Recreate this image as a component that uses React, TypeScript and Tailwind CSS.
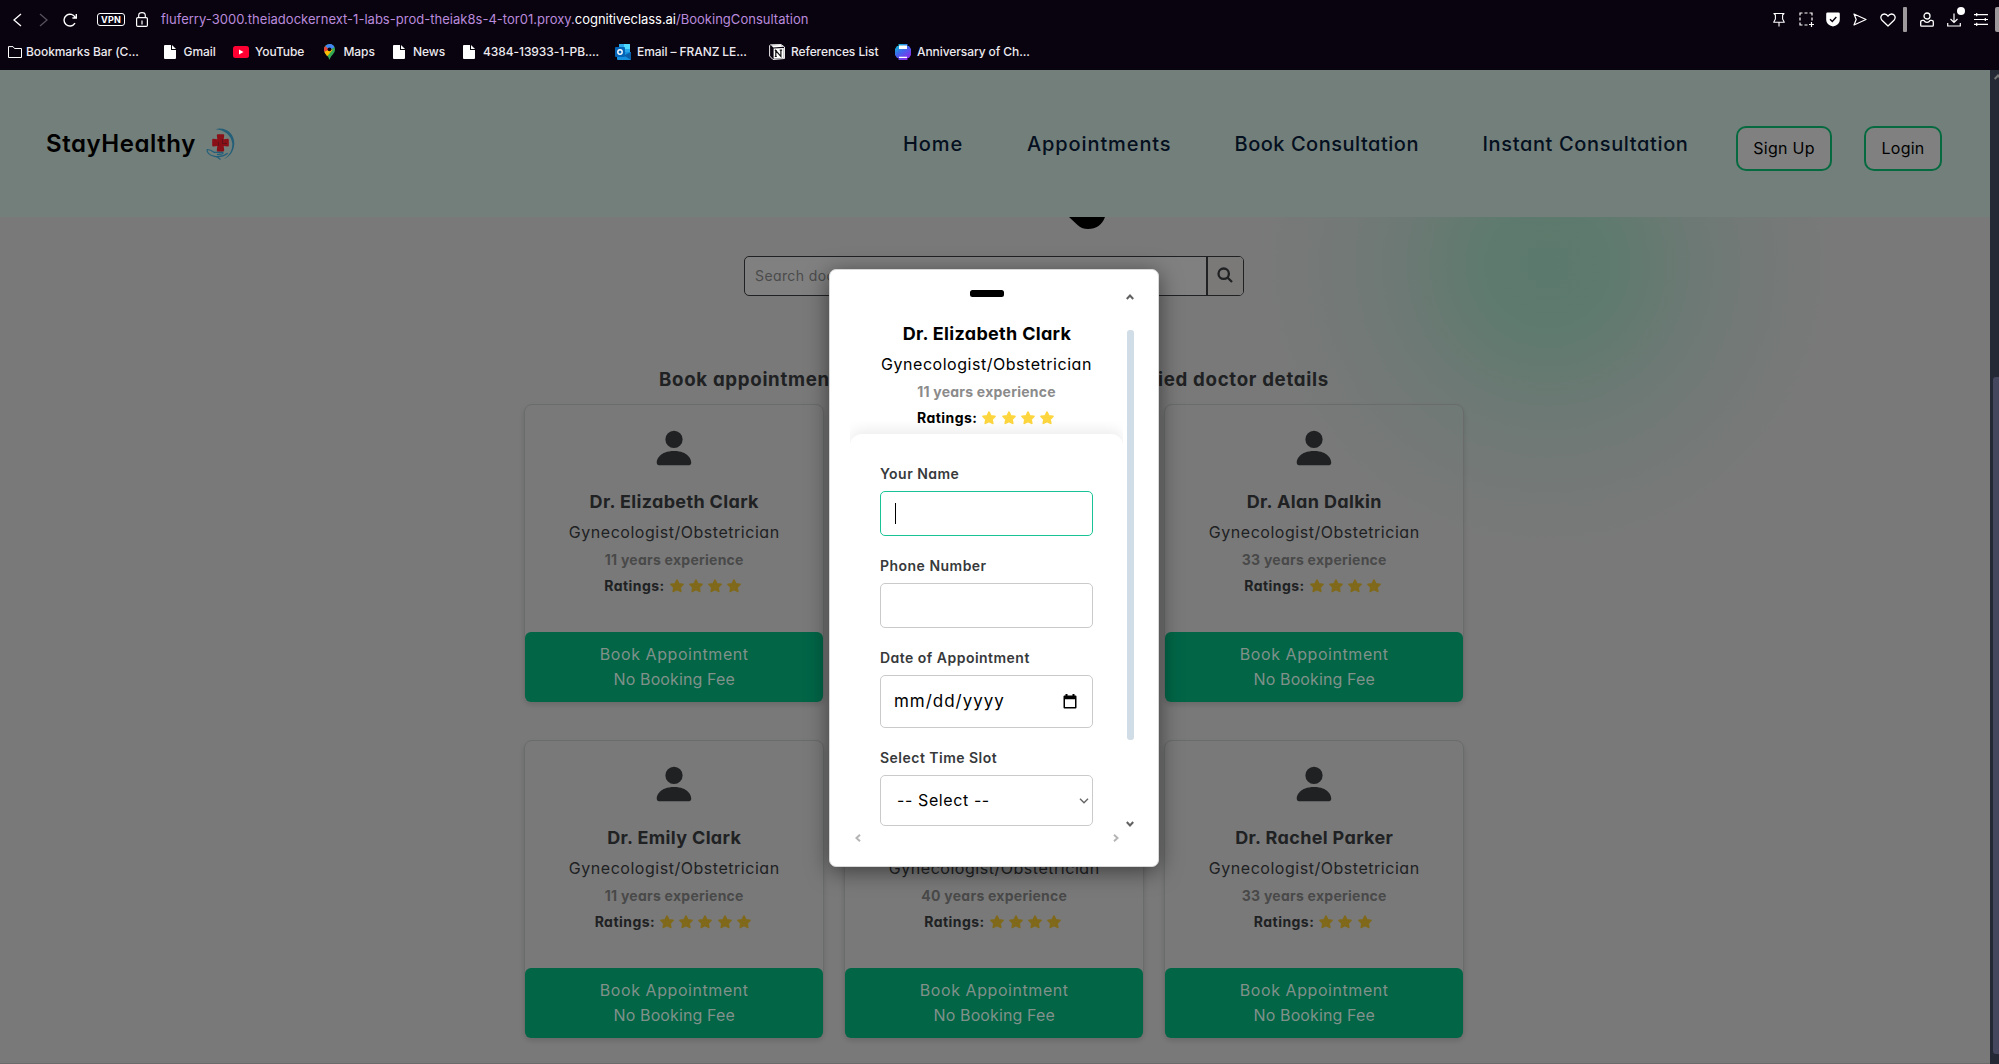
import type { ReactNode } from 'react';
import { BsPersonFill } from 'react-icons/bs';

type Doctor = { name: string; years: string; stars: number };

const doctors: Doctor[] = [
  { name: 'Dr. Elizabeth Clark', years: '11', stars: 4 },
  { name: 'Dr. Sarah Paulson', years: '15', stars: 4 },
  { name: 'Dr. Alan Dalkin', years: '33', stars: 4 },
  { name: 'Dr. Emily Clark', years: '11', stars: 5 },
  { name: 'Dr. Tiana Parker', years: '40', stars: 4 },
  { name: 'Dr. Rachel Parker', years: '33', stars: 3 },
];

function Star({ className }: { className: string }) {
  return (
    <svg viewBox="0 0 14 14" className={'h-[14px] w-[14px] ' + className} fill="currentColor" stroke="currentColor" strokeWidth="1.8" strokeLinejoin="round">
      <path d="M7 1.2 8.700 4.900 12.900 5.400 10 8.300 10.700 12.300 7 10.500 3.300 12.300 4 8.300 1.100 5.400 5.300 4.900Z" />
    </svg>
  );
}

function Ratings({ count, starClass }: { count: number; starClass: string }) {
  return (
    <div className="mt-[5px] flex h-[21px] items-center text-[14px] leading-[21px] font-bold tracking-[0.45px]">
      <span className="mr-[5px]">Ratings:</span>
      <span className="flex gap-[5.2px]">
        {Array.from({ length: count }, (_, i) => (
          <Star key={i} className={starClass} />
        ))}
      </span>
      <span className="w-[2px]" />
    </div>
  );
}

function DoctorCard({ doctor }: { doctor: Doctor }) {
  return (
    <article className="flex h-[298px] w-[299.5px] flex-col items-center rounded-[8px] border border-[#6a6b6b] shadow-[0_3px_5px_rgba(0,0,0,0.13)]">
      <BsPersonFill className="mt-[20px] h-[46px] w-[46px]" />
      <h4 className="mt-[17px] pl-px text-[18px] leading-[27px] font-bold tracking-[0.35px]">{doctor.name}</h4>
      <p className="mt-[5px] pl-px text-[16px] leading-[24px] tracking-[0.53px]">Gynecologist/Obstetrician</p>
      <p className="mt-[5px] pl-px text-[14px] leading-[21px] font-bold tracking-[0.25px] text-[#494949]">{doctor.years} years experience</p>
      <Ratings count={doctor.stars} starClass="text-[#80691a]" />
      <button className="mt-auto -mb-px h-[70px] w-[298px] rounded-[6px] bg-[#016546] pl-px text-[16px] leading-[25px] tracking-[0.57px] text-[#80918a]">
        Book Appointment
        <br />
        <span className="tracking-[0.12px]">No Booking Fee</span>
      </button>
    </article>
  );
}

function FileIcon() {
  return (
    <svg viewBox="0 0 12 14" className="h-[14px] w-[12px]">
      <path d="M1 0H7V5H12V13a1 1 0 0 1-1 1H1a1 1 0 0 1-1-1V1a1 1 0 0 1 1-1Z" fill="#fff" />
      <path d="M8 0 12 4H8Z" fill="#fff" />
    </svg>
  );
}

function Bookmark({ icon, label, className }: { icon: ReactNode; label: string; className: string }) {
  return (
    <div className={'flex shrink-0 items-center ' + className}>
      {icon}
      <span className="whitespace-nowrap">{label}</span>
    </div>
  );
}

function BrowserBar() {
  return (
    <div className="h-[70px] shrink-0 bg-[#09020f] text-white">
      <div className="flex h-[39px] items-center pl-[12px]">
        <svg viewBox="0 0 10 14" className="h-[14px] w-[10px]" fill="none" stroke="#fff" strokeWidth="1.3"><path d="M9 1 2 7l7 6" /></svg>
        <svg viewBox="0 0 10 14" className="ml-[17px] h-[14px] w-[10px]" fill="none" stroke="#57505d" strokeWidth="1.3"><path d="M1 1l7 6-7 6" /></svg>
        <svg viewBox="0 0 15 14" className="ml-[14px] h-[14px] w-[15px]" fill="none" stroke="#fff" strokeWidth="1.4">
          <path d="M12 10.2A5.9 5.9 0 1 1 12.3 4.6M13.3 1v4H9.4" />
        </svg>
        <span className="ml-[19px] flex h-[13px] w-[28px] items-center justify-center rounded-[3px] border border-white text-[9px] leading-none font-bold tracking-[0.2px]">VPN</span>
        <svg viewBox="0 0 12 15" className="ml-[11px] h-[15px] w-[12px]" fill="none" stroke="#fff" strokeWidth="1.2">
          <rect x=".6" y="5.6" width="10.8" height="8.8" rx="1.2" />
          <path d="M2.7 5.6V3.4Q2.7.6 6 .6t3.3 2.8v2.2M6 8.4v4" />
        </svg>
        <p className="ml-[13px] pb-px whitespace-nowrap text-[13px] leading-[20px] text-[#b98bdc]">
          <span className="tracking-[0.02px]">fluferry-3000.theiadockernext-1-labs-prod-theiak8s-4-tor01.proxy.</span>
          <span className="tracking-[-0.04px] text-white">cognitiveclass.ai</span>
          <span className="tracking-[0.02px]">/BookingConsultation</span>
        </p>
        <div className="ml-auto flex shrink-0 items-center">
          <svg viewBox="0 0 12 15" className="h-[15px] w-[12px]" fill="none" stroke="#fff" strokeWidth="1.1" strokeLinejoin="round">
            <path d="M1 1.5h10L9.6 3v4L11.3 10.2H.7L2.4 7V3ZM6 10.2v4.4" />
          </svg>
          <svg viewBox="0 0 15 15" className="ml-[14px] h-[15px] w-[15px]" fill="none" stroke="#fff" strokeWidth="1.2">
            <path d="M1 3.5V1h2.500M5.500 1h3M10.500 1H13v2.500M13 5.500v3M1 5.500v3M1 10.500V13h2.500M5.500 13h3M12.500 10v5M10 12.500h5" />
          </svg>
          <svg viewBox="0 0 14 15" className="ml-[12px] h-[15px] w-[14px]">
            <path d="M1.500.5h11a1.300 1.300 0 0 1 1.300 1.300V8Q13.800 12.500 7 14.600.2 12.500.2 8V1.800A1.300 1.300 0 0 1 1.500.5Z" fill="#fff" />
            <path d="M4 7.200 6.300 9.500 10.300 5" fill="none" stroke="#09020f" strokeWidth="1.500" />
          </svg>
          <svg viewBox="0 0 14 13" className="ml-[13px] h-[13px] w-[14px]" fill="none" stroke="#fff" strokeWidth="1.200" strokeLinejoin="round">
            <path d="M1 1 13 6.500 1 12 3.200 6.500Z" />
          </svg>
          <svg viewBox="0 0 16 14" className="ml-[13px] h-[14px] w-[16px]" fill="none" stroke="#fff" strokeWidth="1.300" strokeLinejoin="round">
            <path d="M8 13 2 7.300C-.2 4.900 1 1 4.300 1 6 1 7.300 1.900 8 3.200 8.700 1.900 10 1 11.700 1 15 1 16.200 4.900 14 7.300Z" />
          </svg>
          <span className="ml-[7px] h-[25px] w-[4px] rounded-[1px] bg-[#9c989b]" />
          <svg viewBox="0 0 14 15" className="ml-[13px] h-[15px] w-[14px]" fill="none" stroke="#fff" strokeWidth="1.300">
            <circle cx="7" cy="4" r="3" />
            <path d="M3.800 8.300H2.600Q.7 8.300 .7 10.200v3q0 .9.900.9h10.800q.9 0 .9-.9v-3q0-1.900-1.900-1.900h-1.200Q9 10.300 7 10.300T3.800 8.300Z" strokeLinejoin="round" />
          </svg>
          <span className="relative ml-[13px] h-[14px] w-[14px]">
            <svg viewBox="0 0 14 14" className="h-[14px] w-[14px]" fill="none" stroke="#fff" strokeWidth="1.200">
              <path d="M7 .5v8.500M3.500 6 7 9.500 10.500 6M.7 10v3h12.600v-3" />
            </svg>
            <span className="absolute -top-[6px] left-[10px] h-[8px] w-[8px] rounded-full bg-white" />
          </span>
          <svg viewBox="0 0 14 13" className="ml-[13px] h-[13px] w-[14px]" fill="none" stroke="#fff" strokeWidth="1.200">
            <path d="M0 1.600h14M0 6.500h14M0 11.400h14M2.700 0v3.200M11.300 4.900v3.200M2.700 9.800V13" />
          </svg>
          <span className="ml-[7px] h-[25px] w-[4px] rounded-l-[2px] bg-[#9c989b]" />
        </div>
      </div>

      <div className="flex h-[25px] items-center pl-[8px] text-[12px] font-medium tracking-[-0.08px] text-[#eceaee]">
        <Bookmark
          className="w-[155.5px] gap-[4px]"
          label="Bookmarks Bar (C..."
          icon={<svg viewBox="0 0 14 12" className="h-[12px] w-[14px]" fill="none" stroke="#fff"><path d="M.5.600H5L6.500 2.500h7v9H.5Z" /></svg>}
        />
        <Bookmark className="w-[69.5px] gap-[8px]" label="Gmail" icon={<FileIcon />} />
        <Bookmark
          className="w-[90.5px] gap-[6px]"
          label="YouTube"
          icon={<svg viewBox="0 0 16 12" className="h-[12px] w-[16px]"><rect width="16" height="12" rx="2.500" fill="#ff0033" /><path d="M6 3.500v5L10.500 6Z" fill="#fff" /></svg>}
        />
        <Bookmark
          className="w-[69.5px] gap-[9px]"
          label="Maps"
          icon={
            <svg viewBox="0 0 11 16" className="h-[16px] w-[11px]">
              <path d="M5.500 0A5.500 5.500 0 0 1 11 5.500C11 9.500 7 11 5.500 16 4.500 11.500 0 9.500 0 5.500A5.500 5.500 0 0 1 5.500 0Z" fill="#34a853" />
              <path d="M.4 8 6 2.500 8.500 6 3.200 12.200Q1.300 10 .4 8Z" fill="#fbbc04" />
              <path d="M1.300 2A5.500 5.500 0 0 0 .3 7.800L5.500 5.500Z" fill="#ea4335" />
              <path d="M1.300 2A5.500 5.500 0 0 1 10.500 3.200L5.500 6Z" fill="#4285f4" />
              <circle cx="5.500" cy="5.300" r="1.900" fill="#09020f" />
            </svg>
          }
        />
        <Bookmark className="w-[70px] gap-[8px]" label="News" icon={<FileIcon />} />
        <Bookmark className="w-[152px] gap-[8px]" label="4384-13933-1-PB...." icon={<FileIcon />} />
        <Bookmark
          className="w-[154px] gap-[6px]"
          label="Email – FRANZ LE..."
          icon={
            <svg viewBox="0 0 16 16" className="h-[16px] w-[16px]">
              <path d="M4 0h11v8H4Z" fill="#28a8ea" />
              <path d="M9 0h6v5H9Z" fill="#50d9ff" />
              <path d="M2 8h14v8H3a1 1 0 0 1-1-1Z" fill="#1490df" />
              <path d="M16 8v8L9 11.500Z" fill="#0a5ea8" />
              <rect y="3" width="10" height="10" rx="1" fill="#0364b8" />
              <circle cx="5" cy="8" r="2.200" fill="none" stroke="#fff" strokeWidth="1.400" />
            </svg>
          }
        />
        <Bookmark
          className="w-[126px] gap-[6px]"
          label="References List"
          icon={
            <svg viewBox="0 0 16 16" className="h-[16px] w-[16px]">
              <path d="M1.500.8 12 .5 15.500 3V14.500L4 15.500.6 12V1.500Z" fill="#09020f" stroke="#e8e8e8" />
              <path d="M2 1.200 12 .9 14.500 2.800 4.300 3.400Z" fill="#fff" />
              <path d="M4.600 4.500 14.800 3.900V14L4.600 14.700Z" fill="#fff" />
              <path d="M6.800 12.500V6.500L11.900 12.300V6.200M5.800 6.500h2M10.700 6.200h2.400M5.800 12.500h2" stroke="#111" strokeWidth="1.200" fill="none" />
            </svg>
          }
        />
        <Bookmark
          className="gap-[6px]"
          label="Anniversary of Ch..."
          icon={
            <svg viewBox="0 0 16 16" className="h-[16px] w-[16px]">
              <defs><linearGradient id="badge" x1="0" y1="0" x2=".7" y2="1"><stop stopColor="#00d0cc" /><stop offset=".5" stopColor="#3f66ee" /><stop offset="1" stopColor="#8b2be8" /></linearGradient></defs>
              <path d="M3.500 0h9v2H14l2 3v6l-2 3h-1.500v2h-9v-2H2L0 11V5l2-3h1.500Z" fill="url(#badge)" />
              <path d="M4 1.500h8V5H4ZM4 12.700h8v1.400H4Z" fill="#fff" />
            </svg>
          }
        />
      </div>
    </div>
  );
}

function Logo() {
  return (
    <svg viewBox="0 0 30 32" className="h-[32px] w-[30px]" fill="none">
      <path d="M9.500 1.200C20-1.600 28.500 6 28.300 15.500 28.100 23 24 28.500 18 31 24 27 26.600 21.500 26.300 15.500 25.700 7.500 18.500 1.800 9.500 1.200Z" fill="#235f78" />
      <path d="M.8 21.500Q1.500 27 8 28.200q4 .5 6.500 3.300M1 21.500q4 0 7 2.800l8-.1q2.200.6 0 1.700l-5 .7M8.500 28.300q7 1.500 13.300-3.100" stroke="#245f7a" strokeWidth="1.200" />
      <path d="M11.800 6.200h5.400q1 0 1 1l-.5 4 4-.4q1.100 0 1.100 1v5.600q0 1.100-1.100 1l-4-.5.500 4q0 1.500-1 1.500h-5.400q-1 0-1-1.500l.5-4-4 .500q-1.100 0-1.100-1v-5.600q0-1.100 1.100-1l4 .500-.5-4q0-1.100 1-1.100Z" fill="#8a1018" />
      <path d="M16.500 11v4.500H21M12.500 17.800v-4" stroke="#5f1016" />
    </svg>
  );
}

function Header() {
  return (
    <header className="flex h-[147px] items-center bg-[#737f7a] pl-[46px] text-[20px] font-medium text-[#040f20]">
      <div className="flex w-[857px] items-center">
        <span className="text-[24px] font-semibold tracking-[0.57px] text-black">StayHealthy</span>
        <span className="ml-[10px]"><Logo /></span>
      </div>
      <nav className="flex whitespace-nowrap">
        <a className="w-[124px] tracking-[0.88px]">Home</a>
        <a className="w-[207.5px] tracking-[0.89px]">Appointments</a>
        <a className="w-[248px] tracking-[0.52px]">Book Consultation</a>
        <a className="w-[253.5px] tracking-[0.64px]">Instant Consultation</a>
      </nav>
      <div className="mt-[10px] flex gap-[32px] text-[16px] font-normal tracking-[0.25px] text-black">
        <button className="h-[45px] w-[96px] rounded-[10px] border-2 border-[#066a40] bg-[#808080] pb-px">Sign Up</button>
        <button className="h-[45px] w-[78px] rounded-[10px] border-2 border-[#066a40] bg-[#808080] pb-px">Login</button>
      </div>
    </header>
  );
}

function Field({ label, active, className, children }: { label: string; active?: boolean; className: string; children?: ReactNode }) {
  return (
    <label className="block">
      <span className="block text-[14px] leading-[21px] font-semibold tracking-[0.48px] text-[#37393b]">{label}</span>
      <span className={'mt-[7px] flex items-center rounded-[5px] border bg-white ' + (active ? 'border-[#18c496] ' : 'border-[#cacaca] ') + className}>{children}</span>
    </label>
  );
}

function Chevron({ className }: { className?: string }) {
  return (
    <svg viewBox="0 0 8 8" className={'h-[8px] w-[8px] ' + (className ?? '')} fill="none" stroke="currentColor" strokeWidth="2"><path d="M.8 6 4 2.500 7.200 6" /></svg>
  );
}

function BookingModal() {
  return (
    <div className="absolute top-[199px] left-[829px] flex h-[598px] w-[330px] rounded-[7px] border border-[#d8d8d8] bg-white text-black shadow-[0_4px_22px_rgba(0,0,0,0.5)]">
      <div className="ml-[20px] flex w-[273px] flex-col items-center">
        <div className="mt-[20px] mr-[-1px] h-[7px] w-[34px] shrink-0 rounded-[2.5px] bg-black" />
        <h4 className="mt-[23px] pl-px text-[18px] leading-[27px] font-bold tracking-[0.31px]">Dr. Elizabeth Clark</h4>
        <p className="mt-[5px] text-[16px] leading-[24px] tracking-[0.53px]">Gynecologist/Obstetrician</p>
        <p className="mt-[5px] text-[14px] leading-[21px] font-bold tracking-[0.23px] text-[#8b8b8b]">11 years experience</p>
        <Ratings count={4} starClass="text-[#fdd63f]" />
        <div className="-mt-[7px] w-full overflow-hidden pt-[13px]">
          <div className="h-[393px] rounded-t-[12px] px-[30px] pt-[29px] shadow-[0_-4px_14px_rgba(0,0,0,0.08)]">
            <Field label="Your Name" active className="h-[45px] pl-[14px]"><span className="h-[21px] w-px bg-black" /></Field>
            <div className="h-[19px]" />
            <Field label="Phone Number" className="h-[45px]" />
            <div className="h-[19px]" />
            <Field label="Date of Appointment" className="h-[53px] justify-between pr-[15px] pl-[13px]">
              <span className="text-[17px] tracking-[0.97px]">mm/dd/yyyy</span>
              <svg viewBox="0 0 14 15" className="h-[15px] w-[14px]"><path d="M2.500 0h2v1.500h5V0h2v1.500h1q1 0 1 1V13.500q0 1-1 1h-11q-1 0-1-1V2.500q0-1 1-1h1ZM2 5.300V13h10V5.300Z" fill="#000" fillRule="evenodd" /></svg>
            </Field>
            <div className="h-[19px]" />
            <Field label="Select Time Slot" className="h-[51px] justify-between pr-[3px] pl-[16px]">
              <span className="pb-px text-[16px] tracking-[0.6px]">-- Select --</span>
              <svg viewBox="0 0 10 6" className="h-[6px] w-[10px]" fill="none" stroke="#666" strokeWidth="1.400"><path d="M1 .7 5 4.700 9 .7" /></svg>
            </Field>
          </div>
        </div>
        <div className="mt-[7px] flex w-[266px] shrink-0 justify-between text-[#b5b5b5]">
          <Chevron className="-rotate-90" />
          <Chevron className="rotate-90" />
        </div>
      </div>
      <div className="ml-[3px] flex w-[8px] flex-col items-center pt-[23px] text-[#616161]">
        <Chevron />
        <div className="mt-[29px] h-[410px] w-[7px] rounded-[3px] bg-[#d0dce6]" />
        <Chevron className="mt-[80px] rotate-180" />
      </div>
    </div>
  );
}

export default function App() {
  return (
    <div className="flex h-[1064px] w-[1999px] flex-col overflow-hidden font-['Inter',sans-serif]">
      <BrowserBar />
      <div className="flex grow">
        <div className="relative h-[994px] w-[1990px] overflow-hidden border-b border-[#6b6b6b] bg-[#797979] text-[#202123] [font-feature-settings:'cv11']">
          <div className="absolute -top-[105px] left-[1248px] h-[600px] w-[600px] rounded-full bg-[radial-gradient(closest-side,#5b796c_0%,#5e7a6e_20%,#657a71_35%,#6c7974_48%,#717976_62%,#757977_78%,#797979_98%)]" />
          <div className="relative">
            <Header />
            <svg viewBox="0 0 36 12" className="absolute top-[147px] left-[1069px] h-[12px] w-[36px]"><path d="M0 0H36Q31.500 12 19 12 12.500 12 8 7.500Z" fill="#000" /></svg>
            <div className="mt-[39px] ml-[744px] flex h-[40px] w-[500px] rounded-[5px] border border-[#202123] bg-[#808080]">
              <div className="flex grow items-center border-r-2 border-[#202123] pb-px pl-[10px] text-[14px] tracking-[0.4px] text-[#4b4b4b]">Search doctors, clinics, hospitals, etc.</div>
              <button className="flex w-[35px] items-center justify-center rounded-r-[4px] bg-[#7b7878] pr-px pb-[2px]">
                <svg viewBox="0 0 16 16" className="h-[16px] w-[16px]" fill="none" stroke="#202123" strokeWidth="2.300"><circle cx="6.700" cy="6.700" r="5.200" /><path d="m10.500 10.500 4.500 4.500" /></svg>
              </button>
            </div>
            <h3 className="mt-[70px] ml-[659px] text-[18.7px] leading-[28px] font-bold tracking-[0.67px] whitespace-nowrap">
              Book appointments with minimum wait-time &amp; verified doctor details
            </h3>
            <main className="mt-[10px] ml-[524px] grid w-[939.5px] grid-cols-[299px_299px_299px] gap-x-[21px] gap-y-[38px]">
              {doctors.map((d) => (
                <DoctorCard key={d.name} doctor={d} />
              ))}
            </main>
          </div>
          <BookingModal />
        </div>
        <div className="flex h-[994px] w-[9px] flex-col items-end bg-[#252935]">
          <svg viewBox="0 0 8 6" className="mt-[4px] mr-[-3px] h-[6px] w-[8px]" fill="none" stroke="#777" strokeWidth="2"><path d="M.7 5 4 1.500 7.300 5" /></svg>
          <div className="mt-[297px] h-[677px] w-[6px] rounded-l-[3px] bg-[#45475e]" />
        </div>
      </div>
    </div>
  );
}
